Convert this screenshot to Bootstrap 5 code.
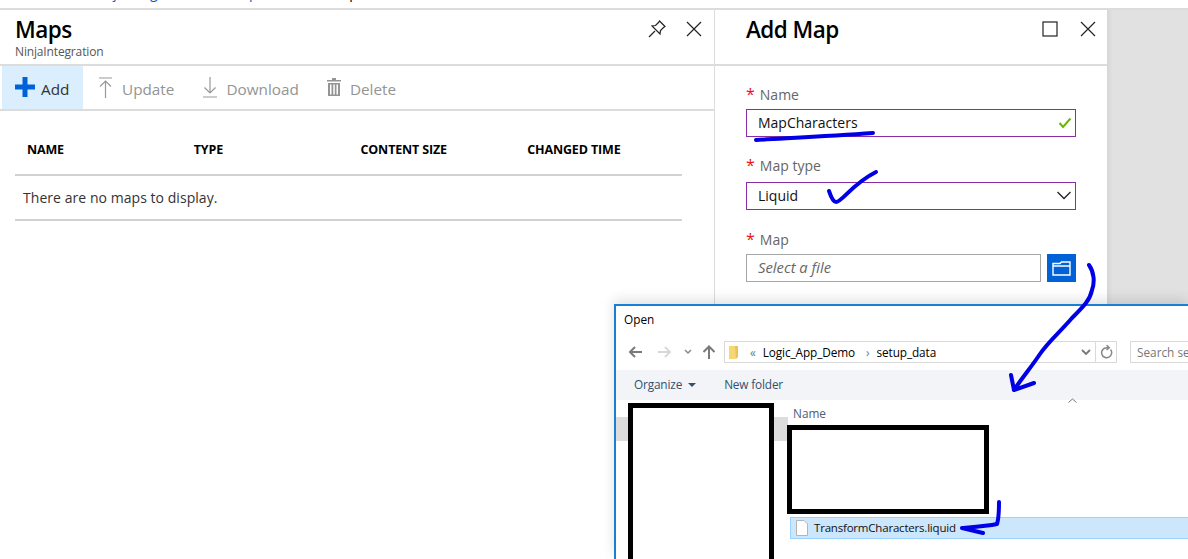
<!doctype html>
<html lang="en">
<head>
  <meta charset="UTF-8">
  <meta name="viewport" content="width=device-width, initial-scale=1.0">
  <title>Add Map</title>
  <link href="https://cdn.jsdelivr.net/npm/bootstrap@5.3.0/dist/css/bootstrap.min.css" rel="stylesheet">
  <style>
    html, body { height: 100%; }
    body {
      position: relative;
      overflow: hidden;
      background: #fff;
      color: #000;
      font-family: "Open Sans", "Noto Sans", "Liberation Sans", sans-serif;
      font-size: 14px;
    }
    .crumbs {
      height: 10px;
      overflow: hidden;
      border-bottom: 2px solid #dcdcdc;
      color: #0062d6;
      padding-left: 15px;
      gap: 12px;
      line-height: 20px;
    }
    .crumbs span { margin-top: -17px; white-space: nowrap; }
    .crumbs .crumb-1 { margin-left: 24px; }
    .crumbs .crumb-2 { margin-left: 20px; }
    .crumbs .crumb-3 { margin-left: 23px; color: #000; }
    .blades { height: 549px; }
    .blade-list { width: 714px; }
    .blade-form { width: 393px; border-left: 1px solid #dcdcdc; }
    .blade-rest { background: #e1e1e1; box-shadow: inset 6px 0 6px -5px rgba(0,0,0,.08); }
    .blade-head { height: 56px; border-bottom: 2px solid #dcdcdc; }
    .blade-list .blade-head { padding: 6px 11px 0 15px; }
    .blade-form .blade-head { padding: 6px 10px 0 31px; }
    .blade-title { font-size: 22.5px; font-weight: 600; line-height: 28px; letter-spacing: -.55px; margin: 0; }
    .blade-sub { font-size: 12px; line-height: 15px; color: #555; letter-spacing: -.15px; }
    .head-btns { gap: 20px; padding-top: 4px; }
    .pin-mark { margin-right: -2px; margin-left: 2px; margin-top: -1px; }
    .toolbar-row { height: 45px; border-bottom: 2px solid #dcdcdc; padding-left: 2px; }
    .tool-btn {
      display: flex; align-items: center; height: 43px;
      padding: 4px 15px 0 13px; gap: 9px;
      border: 0; border-radius: 0;
      font-size: 15.3px; color: #949494; background: none;
    }
    .tool-btn svg { margin-top: -5px; flex: none; }
    .tool-btn.tool-add { background: #dbeefe; color: #333; gap: 6px; width: 81px; padding-right: 0; }
    .tool-btn.tool-update { margin-left: 3px; gap: 10px; padding-right: 16px; }
    .maps-table { width: 667px; margin: 0 0 0 15px; table-layout: fixed; }
    .maps-table th {
      height: 64px; padding: 16px 0 0 12px;
      font-size: 12.5px; font-weight: 700; letter-spacing: -.15px;
      border-bottom: 2px solid #d2d2d2; vertical-align: middle;
    }
    .maps-table td {
      height: 45px; padding: 0 0 0 8px;
      font-size: 14px; color: #333; letter-spacing: .05px;
      border-bottom: 2px solid #d2d2d2; vertical-align: middle;
    }
    .form-pane { padding: 18px 31px 0; }
    .field-label { display: block; height: 20px; line-height: 20px; margin: 0 0 5px; color: #666; font-size: 14px; }
    .field-label b { color: #e81123; font-weight: 400; margin-right: 5px; font-size: 16px; }
    .field-label.label-wide { margin-bottom: 7px; }
    .field-box { position: relative; width: 330px; height: 28px; margin-bottom: 18px; }
    .field-box.box-wide { margin-bottom: 19px; }
    .field-box .form-control {
      height: 28px; padding: 0 11px 2px; min-height: 0;
      border: 1px solid #8a2da5; border-radius: 0;
      font-size: 14px; color: #111; letter-spacing: 0;
      box-shadow: none;
    }
    .field-mark { position: absolute; top: 8px; right: 4px; }
    .file-row { gap: 6px; width: 330px; height: 28px; }
    .file-row .form-control {
      height: 28px; padding: 0 11px 2px; min-height: 0;
      border: 1px solid #a6a6a6; border-radius: 0;
      font-size: 14.8px; font-style: italic;
    }
    .file-row .form-control::placeholder { color: #666; opacity: 1; }
    .file-btn {
      flex: 0 0 29px; height: 28px; padding: 0;
      background: #0062d6; border: 0; border-radius: 0;
      display: flex; align-items: center; justify-content: center;
    }
    .open-dialog {
      position: absolute; left: 614px; top: 304px; right: 0; bottom: 0;
      overflow: hidden;
      background: #fff;
      border-top: 2px solid #1a7fd4;
      border-left: 2px solid #1a7fd4;
      box-shadow: 0 -4px 12px rgba(0,0,0,.12);
      font-size: 11.8px;
    }
    .dlg-title { height: 24px; padding: 5px 0 0 8px; line-height: 16px; color: #000; }
    .dlg-addr { height: 40px; padding: 11px 0 8px 12px; }
    .nav-back { margin-right: 16px; }
    .nav-fwd { margin-right: 12px; }
    .nav-more { margin-right: 10px; }
    .addr-box {
      width: 393px; height: 22px;
      border: 1px solid #d9d9d9;
      line-height: 20px; color: #000;
    }
    .addr-path { width: 372px; border-right: 1px solid #d9d9d9; padding-left: 4px; gap: 7px; letter-spacing: -.1px; }
    .addr-sep { color: #777; }
    .addr-refresh { width: 20px; justify-content: center; }
    .search-box {
      width: 120px; height: 22px; margin-left: 13px; padding-left: 6px;
      border: 1px solid #d9d9d9; color: #777; line-height: 20px; white-space: nowrap;
    }
    .dlg-tools { height: 30px; background: #f3f4f7; padding-left: 18px; color: #34506f; letter-spacing: -.15px; }
    .caret-down { display: inline-block; margin-left: 6px; vertical-align: 2px; border: 4px solid transparent; border-top-color: #34506f; border-bottom: 0; }
    .new-folder { margin-left: 28px; }
    .dlg-main { height: 200px; }
    .nav-col { position: relative; width: 172px; flex: none; }
    .nav-pick { margin-top: 17px; height: 24px; width: 100%; background: #dcdcdc; }
    .blackout { position: absolute; border: 5px solid #000; background: #fff; }
    .blackout-nav { left: 12px; top: 3px; width: 146px; height: 240px; }
    .list-col { position: relative; flex: 1; min-width: 0; }
    .list-head { height: 25px; padding: 5px 0 0 5px; color: #4c607a; line-height: 16px; position: relative; }
    .sort-up { position: absolute; left: 280px; top: -2px; }
    .blackout-list { left: -1px; top: 25px; width: 202px; height: 89px; }
    .file-line {
      margin: 92px 0 0 2px; height: 22px; gap: 6px; padding: 0 0 1px 5px;
      background: #cce6fc; border: 1px solid #99d1ff; border-right: 0;
      color: #111; line-height: 20px; font-size: 11.5px; letter-spacing: -.2px;
    }
    .pen-marks { position: absolute; left: 0; top: 0; pointer-events: none; }
  </style>
</head>
<body>
  <div class="crumbs d-flex">
    <span>Home</span>
    <span class="crumb-1">NinjaIntegration</span>
    <span class="crumb-2">Maps</span>
    <span class="crumb-3">Add Map</span>
  </div>

  <div class="blades d-flex">
    <div class="blade-list flex-shrink-0">
      <div class="blade-head d-flex justify-content-between">
        <div>
          <h1 class="blade-title">Maps</h1>
          <div class="blade-sub">NinjaIntegration</div>
        </div>
        <div class="head-btns d-flex align-items-start">
          <svg class="pin-mark" width="20" height="20" viewBox="0 0 20 20" fill="none" stroke="#222" stroke-width="1.2"><path d="M12.5 2 18 7.5 16.5 8.5 13.5 11.5 13 15 5 7 8.5 6.5 11.5 3.5ZM8 12 2 18"/></svg>
          <svg width="18" height="18" viewBox="0 0 18 18" fill="none" stroke="#222" stroke-width="1.2"><path d="M2 2 16 16M16 2 2 16"/></svg>
        </div>
      </div>
      <div class="toolbar-row d-flex">
        <button class="btn tool-btn tool-add">
          <svg width="20" height="20" viewBox="0 0 20 20" fill="#0062d6"><path d="M7.5 0h5v7.500h7.500v5h-7.500v7.500h-5v-7.500h-7.500v-5h7.500z"/></svg>
          Add
        </button>
        <button class="btn tool-btn tool-update">
          <svg width="13" height="21" viewBox="0 0 13 21" fill="none" stroke="#999" stroke-width="1.200"><path d="M0 1h13M6.500 21V4M1 9.500 6.500 4 12 9.500"/></svg>
          Update
        </button>
        <button class="btn tool-btn tool-download">
          <svg width="14" height="21" viewBox="0 0 14 21" fill="none" stroke="#999" stroke-width="1.200"><path d="M0 20h14M7 0v16M1.500 10.500 7 16l5.500-5.500"/></svg>
          Download
        </button>
        <button class="btn tool-btn tool-delete">
          <svg width="14" height="18" viewBox="0 0 14 18" fill="#949494"><path d="M5 0h4v2h5v1.500H0V2h5zM1 5h12v13H1zM3 6.500v10h1.500v-10zM6.300 6.500v10h1.500v-10zM9.500 6.500v10H11v-10z" fill-rule="evenodd"/></svg>
          Delete
        </button>
      </div>
      <table class="maps-table">
        <thead>
          <tr><th>NAME</th><th>TYPE</th><th>CONTENT SIZE</th><th>CHANGED TIME</th></tr>
        </thead>
        <tbody>
          <tr><td colspan="4">There are no maps to display.</td></tr>
        </tbody>
      </table>
    </div>

    <div class="blade-form flex-shrink-0">
      <div class="blade-head d-flex justify-content-between">
        <h2 class="blade-title">Add Map</h2>
        <div class="head-btns d-flex align-items-start">
          <svg width="18" height="18" viewBox="0 0 18 18" fill="none" stroke="#222" stroke-width="1.200"><rect x="2" y="2" width="14" height="14"/></svg>
          <svg width="18" height="18" viewBox="0 0 18 18" fill="none" stroke="#222" stroke-width="1.200"><path d="M2 2 16 16M16 2 2 16"/></svg>
        </div>
      </div>
      <div class="form-pane">
        <label class="field-label"><b>*</b>Name</label>
        <div class="field-box">
          <input class="form-control" type="text" value="MapCharacters">
          <svg class="field-mark" width="14" height="12" viewBox="0 0 14 12" fill="none" stroke="#6bb700" stroke-width="2"><path d="M1.500 6 5 10 12.500 1.500"/></svg>
        </div>
        <label class="field-label label-wide"><b>*</b>Map type</label>
        <div class="field-box box-wide">
          <input class="form-control" type="text" value="Liquid">
          <svg class="field-mark" width="16" height="10" viewBox="0 0 16 10" fill="none" stroke="#222" stroke-width="1.300"><path d="M1.500 2 8 8.500 14.500 2"/></svg>
        </div>
        <label class="field-label"><b>*</b>Map</label>
        <div class="file-row d-flex">
          <input class="form-control" type="text" placeholder="Select a file">
          <button class="btn file-btn">
            <svg width="19" height="15" viewBox="0 0 19 15" fill="none" stroke="#fff" stroke-width="1.400"><path d="M1 14V2.500h7L9.500 1H18v13zM1 5h17"/></svg>
          </button>
        </div>
      </div>
    </div>

    <div class="blade-rest flex-grow-1"></div>
  </div>

  <div class="open-dialog">
    <div class="dlg-title">Open</div>
    <div class="dlg-addr d-flex">
      <div class="d-flex align-items-center">
        <svg class="nav-back" width="14" height="12" viewBox="0 0 14 12" fill="none" stroke="#7a7a7a" stroke-width="2"><path d="M14 6H2M7 1 2 6l5 5"/></svg>
        <svg class="nav-fwd" width="14" height="12" viewBox="0 0 14 12" fill="none" stroke="#d8d8d8" stroke-width="2"><path d="M0 6h12M7 1l5 5-5 5"/></svg>
        <svg class="nav-more" width="8" height="6" viewBox="0 0 8 6" fill="none" stroke="#888" stroke-width="1.500"><path d="M1 1l3 3 3-3"/></svg>
        <svg class="me-2" width="14" height="14" viewBox="0 0 14 14" fill="none" stroke="#7a7a7a" stroke-width="2"><path d="M7 14V2M1.500 7 7 1.500 12.500 7"/></svg>
      </div>
      <div class="addr-box d-flex">
        <div class="addr-path d-flex align-items-center">
          <svg width="10" height="14" viewBox="0 0 10 14"><path d="M0 1h6l1 1v12H0z" fill="#f7d774"/><path d="M6 1h3v11l-2 2z" fill="#e8c35a"/></svg>
          <span class="addr-sep ms-1">«</span>
          <span>Logic_App_Demo</span>
          <span class="addr-sep ms-1">›</span>
          <span>setup_data</span>
          <svg class="ms-auto me-1" width="10" height="7" viewBox="0 0 10 7" fill="none" stroke="#777" stroke-width="1.800"><path d="M1 1l4 4 4-4"/></svg>
        </div>
        <div class="addr-refresh d-flex align-items-center">
          <svg width="13" height="14" viewBox="0 0 13 14" fill="none" stroke="#888" stroke-width="1.500"><path d="M10.500 4.500a5 5 0 1 1-4-1.800H9M6.500 0l2.800 2.700-2.800 2.300"/></svg>
        </div>
      </div>
      <div class="search-box">Search setup_data</div>
    </div>
    <div class="dlg-tools d-flex align-items-center">
      <span>Organize<i class="caret-down"></i></span>
      <span class="new-folder">New folder</span>
    </div>
    <div class="dlg-main d-flex">
      <div class="nav-col">
        <div class="nav-pick"></div>
        <div class="blackout blackout-nav"></div>
      </div>
      <div class="list-col">
        <div class="list-head">
          Name
          <svg class="sort-up" width="9" height="5" viewBox="0 0 9 5" fill="none" stroke="#777"><path d="M.5 4.500l4-3.500 4 3.500"/></svg>
        </div>
        <div class="blackout blackout-list"></div>
        <div class="file-line d-flex align-items-center">
          <svg width="12" height="16" viewBox="0 0 12 16"><path d="M.5.500h7.500l3.500 3.500v11.500H.5z" fill="#fff" stroke="#b4b4b4"/></svg>
          <span>TransformCharacters.liquid</span>
        </div>
      </div>
    </div>
  </div>

  <svg class="pen-marks" width="1188" height="559" viewBox="0 0 1188 559" fill="none" stroke="#0000e6" stroke-linecap="round" stroke-linejoin="round">
    <path stroke-width="4" d="M756 140C790 138 830 136 873 133"/>
    <path stroke-width="4" d="M829 191C831 197 833 202 836 202C842 202 852 184 876 172"/>
    <path stroke-width="4" d="M1089 265C1094 272 1095 282 1092 290C1090 300 1084 306 1072 318C1060 332 1048 342 1040 354C1032 366 1022 378 1014 390M1011 375 1014 390 1034 383"/>
    <path stroke-width="4" d="M999 502C999 510 999 518 997 524C988 526 974 527 962 528L983 533"/>
  </svg>
</body>
</html>
